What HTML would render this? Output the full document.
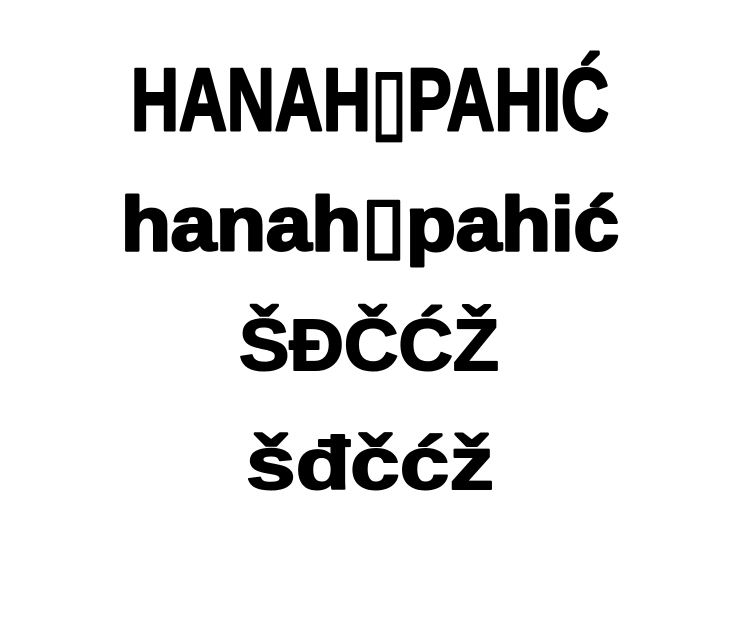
<!DOCTYPE html>
<html><head><meta charset="utf-8"><style>html,body{margin:0;background:#fff;width:738px;height:622px;overflow:hidden}</style></head>
<body>
<svg width="738" height="622" xmlns="http://www.w3.org/2000/svg" font-family="Liberation Sans, DejaVu Sans, sans-serif" font-weight="bold" fill="#000" stroke="#000" stroke-linejoin="round">
<text x="131" y="130" font-size="88" stroke-width="3" textLength="478" lengthAdjust="spacingAndGlyphs">HANAH▯PAHIĆ</text>
<text x="121" y="250" font-size="76" stroke-width="3" textLength="498" lengthAdjust="spacingAndGlyphs">hanah▯pahić</text>
<text x="239" y="370" font-size="72" stroke-width="2" textLength="260" lengthAdjust="spacingAndGlyphs">ŠĐČĆŽ</text>
<text x="246" y="489" font-size="74" stroke-width="2" textLength="248" lengthAdjust="spacingAndGlyphs">šđčćž</text>
</svg>
</body></html>
